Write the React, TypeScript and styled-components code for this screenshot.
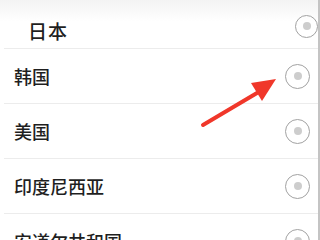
import React, { FunctionComponent } from "react";
import styled, { createGlobalStyle } from "styled-components";

const GlobalStyle = createGlobalStyle`
  html, body {
    margin: 0;
    padding: 0;
    background: #ffffff;
  }
  body {
    font-family: "Noto Sans CJK SC", "Noto Sans", sans-serif;
  }
`;

const Screen = styled.div`
  position: relative;
  width: 318px;
  height: 240px;
  overflow: hidden;
  border-right: 2px solid #c4c4c4;
  background: linear-gradient(180deg, #f3f3f3 0px, #ffffff 22px);
`;

const List = styled.div`
  display: flex;
  flex-direction: column;
`;

const Row = styled.div<{ $first?: boolean }>`
  display: flex;
  align-items: center;
  justify-content: space-between;
  box-sizing: border-box;
  height: ${({ $first }) => ($first ? "48px" : "55px")};
  padding: ${({ $first }) => ($first ? "8px 0 0 28px" : "0 8px 0 10px")};
  border-top: ${({ $first }) => ($first ? "none" : "1px solid #ececec")};
  margin-left: ${({ $first }) => ($first ? "0" : "4px")};
`;

const Label = styled.span<{ $first?: boolean }>`
  font-size: ${({ $first }) => ($first ? "19px" : "18px")};
  font-weight: 500;
  letter-spacing: ${({ $first }) => ($first ? "1px" : "0")};
  line-height: 24px;
  color: #1f1f1f;
  margin-top: ${({ $first }) => ($first ? "6px" : "0")};
`;

const Radio = styled.span<{ $first?: boolean }>`
  box-sizing: border-box;
  width: ${({ $first }) => ($first ? "23px" : "25px")};
  height: ${({ $first }) => ($first ? "23px" : "25px")};
  border-radius: 50%;
  border: 1.5px solid #a2a2a2;
  display: flex;
  align-items: center;
  justify-content: center;
  margin-top: ${({ $first }) => ($first ? "-4px" : "0")};

  &::after {
    content: "";
    width: 8px;
    height: 8px;
    border-radius: 50%;
    background: #cdcdcd;
  }
`;

const Arrow = styled.svg`
  position: absolute;
  left: 0;
  top: 0;
  pointer-events: none;
`;

const countries = ["日本", "韩国", "美国", "印度尼西亚", "安道尔共和国"];

const App: FunctionComponent = () => {
  return (
    <>
      <GlobalStyle />
      <Screen>
        <List>
          {countries.map((name, index) => (
            <Row key={name} $first={index === 0}>
              <Label $first={index === 0}>{name}</Label>
              <Radio $first={index === 0} />
            </Row>
          ))}
        </List>
        <Arrow width="318" height="240" viewBox="0 0 318 240">
          <path d="M203 125 L257 93" stroke="#f0372a" strokeWidth="4" strokeLinecap="round" />
          <polygon points="276,79 251,83 262,101" fill="#f0372a" />
        </Arrow>
      </Screen>
    </>
  );
};

export default App;
